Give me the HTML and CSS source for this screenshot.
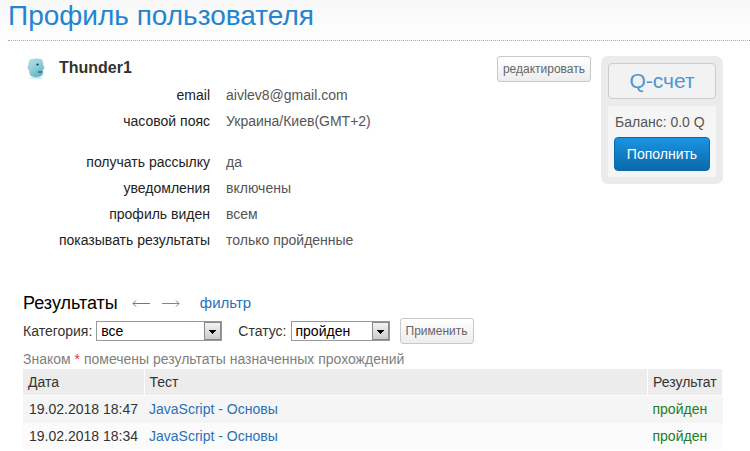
FILE: index.html
```html
<!DOCTYPE html>
<html lang="ru">
<head>
<meta charset="utf-8">
<title>Профиль пользователя</title>
<link rel="stylesheet" href="styles.css">
</head>
<body>
<header class="page-header">
  <h1>Профиль пользователя</h1>
</header>
<main class="content">
  <section class="profile">
    <div class="info">
      <div class="user">
        <svg class="avatar" viewBox="0 0 18 22" aria-hidden="true">
          <defs>
            <linearGradient id="face" x1="0" y1="0" x2="0.6" y2="1">
              <stop offset="0" stop-color="#b9dfe9"/>
              <stop offset="0.5" stop-color="#93cfdd"/>
              <stop offset="1" stop-color="#62b3c7"/>
            </linearGradient>
          </defs>
          <ellipse cx="9" cy="20" rx="7" ry="1.5" fill="#dceff3"/>
          <path d="M4 1.400Q9 .600 14 1.400Q15.600 2 15.800 5V7Q17 8 17 9.500Q17 11 15.900 11.500V15Q15.600 19 9 19.200Q3 19 2.700 15V12.500Q.9 12 1 9.500Q1 7.500 2 6.500V5Q2.200 2 4 1.400Z" fill="url(#face)" stroke="#8cc5d1" stroke-width=".6"/>
          <circle cx="10.500" cy="6.500" r="1.100" fill="#16343d"/>
          <path d="M11 14h4" stroke="#28525d" stroke-width="1.200"/>
        </svg>
        <h2>Thunder1</h2>
      </div>
      <dl class="fields">
        <dt>email</dt><dd>aivlev8@gmail.com</dd>
        <dt>часовой пояс</dt><dd>Украина/Киев(GMT+2)</dd>
      </dl>
      <dl class="fields">
        <dt>получать рассылку</dt><dd>да</dd>
        <dt>уведомления</dt><dd>включены</dd>
        <dt>профиль виден</dt><dd>всем</dd>
        <dt>показывать результаты</dt><dd>только пройденные</dd>
      </dl>
    </div>
    <button type="button" class="btn">редактировать</button>
    <aside class="account">
      <h2 class="account-title">Q-счет</h2>
      <div class="account-body">
        <p>Баланс: 0.0 Q</p>
        <button type="button" class="btn-primary">Пополнить</button>
      </div>
    </aside>
  </section>
  <section>
    <div class="results-head">
      <h2>Результаты</h2>
      <nav class="pager">
        <a class="prev" href="#prev" aria-label="Назад"><svg viewBox="0 0 18 10"><path d="M18 5.500H1M4 2.500L1 5.500L4 8.500"/></svg></a>
        <a href="#next" aria-label="Вперёд"><svg viewBox="0 0 18 10"><path d="M0 5.500H17M14 2.500L17 5.500L14 8.500"/></svg></a>
      </nav>
      <a class="toggle" href="#filter">фильтр</a>
    </div>
    <form class="filter" id="filter">
      <label for="category">Категория:</label>
      <select id="category" class="category"><option>все</option></select>
      <label for="status">Статус:</label>
      <select id="status" class="status"><option>пройден</option></select>
      <button type="button" class="btn">Применить</button>
    </form>
    <p class="note">Знаком <span class="star">*</span> помечены результаты назначенных прохождений</p>
    <table class="results">
      <thead>
        <tr><th class="date">Дата</th><th>Тест</th><th class="result">Результат</th></tr>
      </thead>
      <tbody>
        <tr><td>19.02.2018 18:47</td><td><a href="#test">JavaScript - Основы</a></td><td class="passed">пройден</td></tr>
        <tr><td>19.02.2018 18:34</td><td><a href="#test">JavaScript - Основы</a></td><td class="passed">пройден</td></tr>
      </tbody>
    </table>
  </section>
</main>
</body>
</html>
```
FILE: styles.css
```css
* { box-sizing: border-box; }
body {
  margin: 0;
  background: #fff linear-gradient(#f8f8f8, #fff 48px) no-repeat;
  color: #333;
  font: 14px/26px "Liberation Sans", Arial, sans-serif;
}
h1, h2, p, dl, dd { margin: 0; }
a { color: #2a70b8; text-decoration: none; }
button, select { font-family: inherit; }
.page-header {
  margin-left: 8px;
  padding-bottom: 8px;
  border-bottom: 1px dotted #aaa;
}
h1 { color: #2385cf; font-size: 28px; font-weight: 400; line-height: 32px; }
.content { padding: 15px 27px 0 23px; }
.profile { display: flex; align-items: flex-start; gap: 10px; }
.info { flex: 1; }
.user { display: flex; align-items: center; gap: 14px; padding-left: 4px; }
.avatar { width: 18px; height: 22px; }
.user h2 { font-size: 16px; line-height: 24px; margin-bottom: 2px; }
.fields {
  display: grid;
  grid-template-columns: 187px 1fr;
  column-gap: 16px;
  margin-bottom: 15px;
}
.fields dt { text-align: right; color: #222; }
.fields dd { color: #555; }
.btn {
  height: 26px;
  padding: 0 5px;
  border: 1px solid #c9c9c9;
  border-radius: 3px;
  background: linear-gradient(#fff, #ededed);
  color: #666;
  font-size: 12px;
}
.account {
  width: 122px;
  padding: 7px;
  border-radius: 7px;
  background: #ebebeb;
}
.account-title {
  border: 1px solid #ccc;
  border-radius: 4px;
  background: #f2f2f2;
  color: #4b97d2;
  font-size: 21px;
  font-weight: 400;
  line-height: 34px;
  text-align: center;
}
.account-body { margin-top: 7px; padding: 2px 6px 6px; background: #f5f5f5; }
.account-body p { padding-left: 1px; color: #555; line-height: 29px; white-space: nowrap; }
.btn-primary {
  display: block;
  width: 100%;
  height: 34px;
  padding: 0;
  border: 1px solid #0c68a8;
  border-radius: 4px;
  background: linear-gradient(#1a94e2, #0b69aa);
  color: #fff;
  font-size: 14px;
}
.results-head { display: flex; align-items: center; margin-top: 22px; }
.results-head h2 { color: #000; font-size: 18px; font-weight: 400; }
.results-head .toggle { font-size: 15px; }
.pager { display: flex; gap: 12px; margin: 0 20px 0 14px; }
.pager a { display: flex; }
.pager svg { width: 18px; height: 10px; fill: none; stroke: #4b94d4; }
.pager .prev svg { stroke: #777; }
.filter { display: flex; align-items: center; margin-top: 2px; }
.filter select {
  height: 20px;
  margin: 0 16px 0 4px;
  padding: 0 20px 0 4px;
  border: 1px solid #999;
  border-radius: 0;
  appearance: none;
  background:
    linear-gradient(#000, #000) right 5px top 8px / 7px 1px no-repeat,
    linear-gradient(#000, #000) right 6px top 9px / 5px 1px no-repeat,
    linear-gradient(#000, #000) right 7px top 10px / 3px 1px no-repeat,
    linear-gradient(#000, #000) right 8px top 11px / 1px 1px no-repeat,
    linear-gradient(#f3f3f3, #ccc) right 1px center / 15px 16px no-repeat,
    linear-gradient(#888, #888) right 0 center / 17px 18px no-repeat,
    #fff;
  color: #000;
  font-size: 14px;
  line-height: 18px;
}
.filter .category { width: 126px; }
.filter .status { width: 99px; margin-right: 10px; }
.note { color: #808080; line-height: 20px; margin-top: 5px; }
.star { color: #e33; }
.results { width: 100%; border-collapse: collapse; }
.results th, .results td { padding: 0 5px; text-align: left; font-weight: 400; white-space: nowrap; }
.results th {
  border-right: 1px solid #fff;
  border-bottom: 1px solid #fff;
  background: #ececec;
}
.results td { padding-left: 6px; }
.results td + td { padding-left: 5px; }
.results tbody tr { background: #fbfbfb; }
.results tbody tr:nth-child(odd) { background: #f5f5f5; }
.results .date { width: 121px; }
.results .result { width: 75px; }
.results td { height: 27px; }
.results .passed { color: #1d7d1d; }
```
